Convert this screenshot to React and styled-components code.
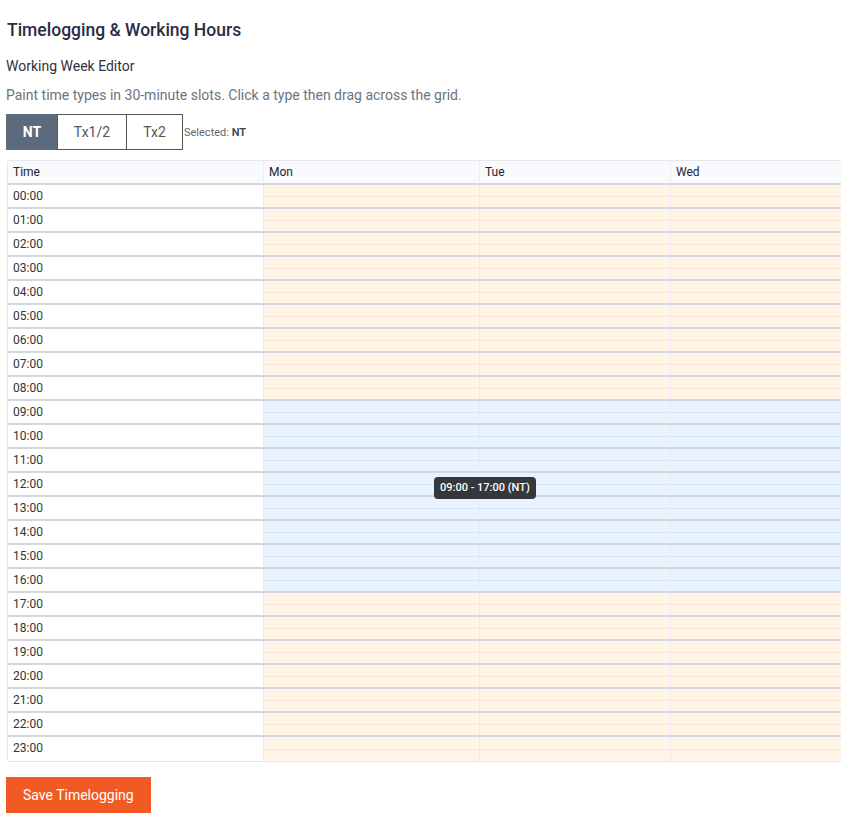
import React from "react";
import styled, { createGlobalStyle } from "styled-components";

const Global = createGlobalStyle`
  html, body { margin: 0; padding: 0; overflow: hidden; background: #fff; }
  body { font-family: Roboto, "Noto Sans", "Liberation Sans", sans-serif; color: #333; }
`;

const Page = styled.div`
  padding: 18px 6px 0 6px;
  width: 841px;
  box-sizing: border-box;
  overflow: hidden;
`;

const Title = styled.h1`
  margin: 0 0 0 1px;
  font-size: 17.5px;
  font-weight: 500;
  color: #2b2b44;
  line-height: 24px;
`;

const SubTitle = styled.h2`
  margin: 14px 0 0 0;
  font-size: 14px;
  font-weight: 400;
  color: #2f3140;
  line-height: 20px;
`;

const Hint = styled.p`
  margin: 9px 0 0 0;
  font-size: 14px;
  color: #6c7480;
  line-height: 20px;
`;

const Toolbar = styled.div`
  display: flex;
  align-items: center;
  margin-top: 9px;
`;

const TypeButton = styled.button`
  height: 36px;
  width: ${(p) => p.$w}px;
  border: 1px solid ${(p) => (p.$active ? "#5c6b7c" : "#555")};
  margin-left: ${(p) => (p.$first ? 0 : -1)}px;
  background: ${(p) => (p.$active ? "#5c6b7c" : "#fff")};
  color: ${(p) => (p.$active ? "#fff" : "#555")};
  font-family: inherit;
  font-size: 14px;
  font-weight: ${(p) => (p.$active ? 700 : 400)};
  padding: 0;
  cursor: pointer;
`;

const Selected = styled.span`
  font-size: 11px;
  color: #666;
  margin-left: 1px;
  b { color: #444; font-weight: 600; }
`;

const TableWrap = styled.div`
  position: relative;
  margin-top: 10px;
  margin-left: 1px;
  width: 880px;
  border: 1px solid #e4e7eb;
  border-radius: 3px;
`;

const Grid = styled.div`
  display: grid;
  grid-template-columns: 255px 216px 191px 1fr;
`;

const HeadCell = styled.div`
  height: 22px;
  line-height: 22px;
  padding-left: 5px;
  font-size: 12px;
  font-weight: 400;
  color: #22232f;
  background: #f9fafb;
  border-bottom: 2px solid #d3d6de;
  border-left: ${(p) => (p.$first ? "none" : "1px solid #eceef2")};
`;

const TimeCell = styled.div`
  height: ${(p) => (p.$last ? 24 : 22)}px;
  line-height: ${(p) => (p.$last ? 23 : 22)}px;
  padding-left: 5px;
  font-size: 12px;
  color: #333;
  background: #fff;
  border-bottom: ${(p) => (p.$last ? "none" : "2px solid #d3d6de")};
`;

const DayCell = styled.div`
  display: flex;
  flex-direction: column;
  height: ${(p) => (p.$last ? 24 : 22)}px;
  border-left: 1px solid #e9e9ee;
  border-bottom: ${(p) => (p.$last ? "none" : "2px solid #d3d6de")};
`;

const Slot = styled.div`
  flex: 1;
  background: ${(p) => (p.$work ? "#e8f3fe" : "#fff4e6")};
  border-bottom: ${(p) =>
    p.$top ? `1px solid ${p.$work ? "#d8e6f6" : "#f8e6d6"}` : "none"};
`;

const Tooltip = styled.div`
  position: absolute;
  left: 426px;
  top: 316px;
  background: #34383d;
  color: #fff;
  font-size: 11px;
  font-weight: 500;
  padding: 0 6px;
  height: 22px;
  line-height: 22px;
  border-radius: 4px;
  white-space: nowrap;
`;

const SaveButton = styled.button`
  margin-top: 15px;
  height: 36px;
  padding: 0 17px;
  background: #f25a24;
  color: #fff;
  border: none;
  font-family: inherit;
  font-size: 14px;
  cursor: pointer;
`;

const days = ["Mon", "Tue", "Wed"];
const hours = Array.from({ length: 24 }, (_, i) => i);

export default function App() {
  return (
    <>
      <Global />
      <Page>
        <Title>Timelogging &amp; Working Hours</Title>
        <SubTitle>Working Week Editor</SubTitle>
        <Hint>Paint time types in 30-minute slots. Click a type then drag across the grid.</Hint>
        <Toolbar>
          <TypeButton $active $first $w={52}>NT</TypeButton>
          <TypeButton $w={70}>Tx1/2</TypeButton>
          <TypeButton $w={57}>Tx2</TypeButton>
          <Selected>
            Selected: <b>NT</b>
          </Selected>
        </Toolbar>
        <TableWrap>
          <Grid>
            <HeadCell $first>Time</HeadCell>
            {days.map((d) => (
              <HeadCell key={d}>{d}</HeadCell>
            ))}
            {hours.map((h) => {
              const last = h === 23;
              const work = h >= 9 && h < 17;
              return (
                <React.Fragment key={h}>
                  <TimeCell $last={last}>{String(h).padStart(2, "0")}:00</TimeCell>
                  {days.map((d) => (
                    <DayCell key={d} $last={last}>
                      <Slot $top $work={work} />
                      <Slot $work={work} />
                    </DayCell>
                  ))}
                </React.Fragment>
              );
            })}
          </Grid>
          <Tooltip>09:00 - 17:00 (NT)</Tooltip>
        </TableWrap>
        <SaveButton>Save Timelogging</SaveButton>
      </Page>
    </>
  );
}
